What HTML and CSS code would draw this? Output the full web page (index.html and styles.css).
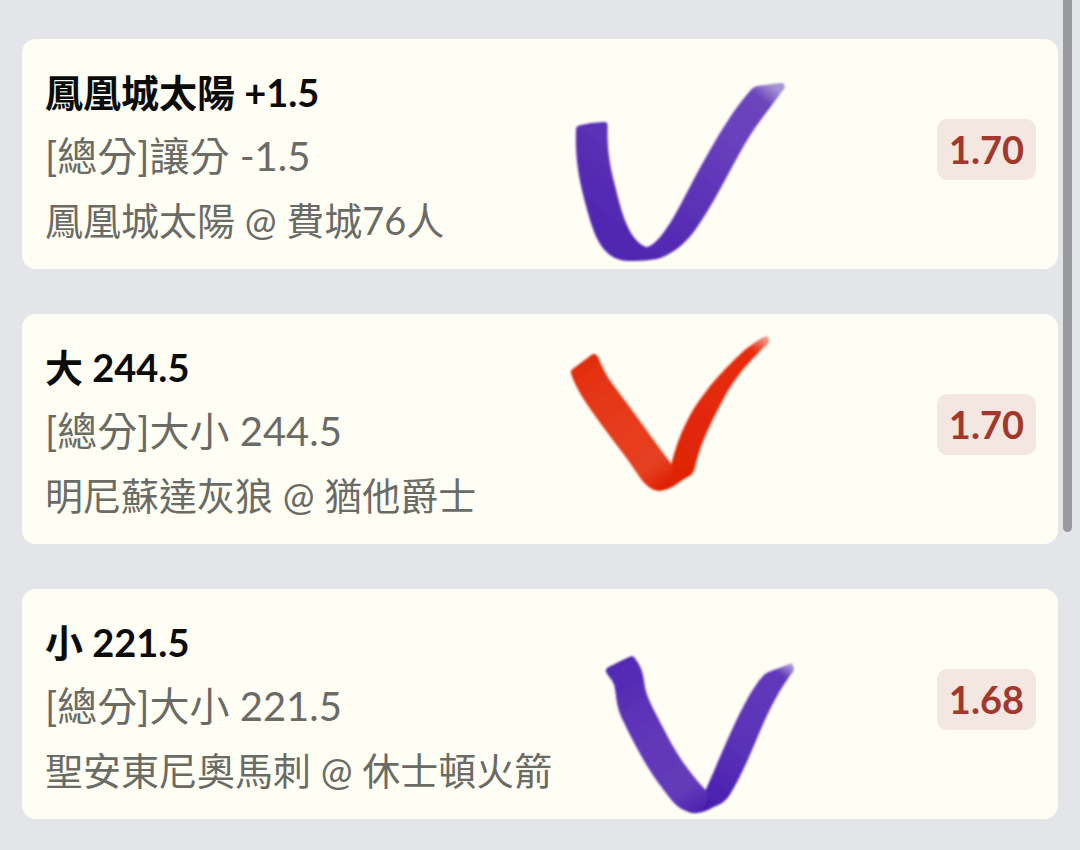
FILE: index.html
```
<!DOCTYPE html>
<html lang="zh-Hant">
<head>
<meta charset="utf-8">
<meta name="viewport" content="width=device-width, initial-scale=1">
<title>投注單</title>
<link rel="stylesheet" href="styles.css">
</head>
<body>
<main class="bets">
  <article class="bet">
    <div class="bet-info">
      <h2 class="bet-pick">鳳凰城太陽 +1.5</h2>
      <p class="bet-market">[總分]讓分 -1.5</p>
      <p class="bet-match">鳳凰城太陽 @ 費城76人</p>
    </div>
    <span class="odds">1.70</span>
    <svg class="mark mark-first" viewBox="0 0 780 660" aria-hidden="true">
      <defs>
        <linearGradient id="ink1" gradientUnits="userSpaceOnUse" x1="250" y1="590" x2="660" y2="70">
          <stop offset="0" stop-color="#5026b0"/>
          <stop offset=".35" stop-color="#5b31b6"/>
          <stop offset=".7" stop-color="#6940bd"/>
          <stop offset=".92" stop-color="#6b45bc"/>
          <stop offset="1" stop-color="#a493d3"/>
        </linearGradient>
        <filter id="soft"><feGaussianBlur stdDeviation="3"/></filter>
      </defs>
      <g filter="url(#soft)">
        <path fill="url(#ink1)" d="M78 208Q77 200 86 197Q125 187 164 186Q173 187 173 196C170 268 180 320 196 380C214 455 236 542 291 562C345 543 396 421 453 318C503 229 551 147 602 91C612 79 624 77 641 76Q670 70 697 69Q708 74 702 86C666 137 620 190 581 258C532 345 486 440 435 511C402 557 363 584 322 597Q275 605 224 602C157 594 134 528 115 463C94 385 74 318 78 208Z"/>
        <path fill="none" stroke="#4b20a8" stroke-opacity=".45" stroke-width="5" d="M87 198Q125 190 166 189"/>
      </g>
    </svg>
  </article>

  <article class="bet">
    <div class="bet-info">
      <h2 class="bet-pick">大 244.5</h2>
      <p class="bet-market">[總分]大小 244.5</p>
      <p class="bet-match">明尼蘇達灰狼 @ 猶他爵士</p>
    </div>
    <span class="odds">1.70</span>
    <svg class="mark mark-second" viewBox="0 0 780 570" aria-hidden="true">
      <defs>
        <linearGradient id="ink2" gradientUnits="userSpaceOnUse" x1="370" y1="470" x2="655" y2="50">
          <stop offset="0" stop-color="#df2405"/>
          <stop offset=".88" stop-color="#e62d0e"/>
          <stop offset="1" stop-color="#efaaa0"/>
        </linearGradient>
        <linearGradient id="ink2b" gradientUnits="userSpaceOnUse" x1="110" y1="120" x2="370" y2="470">
          <stop offset="0" stop-color="#e22d0d"/>
          <stop offset=".3" stop-color="#e53817"/>
          <stop offset=".85" stop-color="#e64022"/>
          <stop offset="1" stop-color="#df2405"/>
        </linearGradient>
      </defs>
      <g filter="url(#soft)">
        <path fill="url(#ink2)" d="M310 500L364 432C385 345 420 275 465 218C507 162 551 122 583 91C608 72 629 55 648 48Q661 53 656 69C598 123 554 173 519 240C478 318 455 365 438 429Q433 461 420 467Q397 480 385 489Q349 518 310 509Z"/>
        <path fill="url(#ink2b)" d="M62 157Q62 150 72 144L127 103Q137 99 144 110C157 141 168 166 190 195C250 274 305 353 364 432Q371 443 366 468Q359 500 335 512C301 514 281 490 260 458C224 403 160 326 115 259C94 228 72 191 62 157Z"/>
        <path fill="none" stroke="#b84a36" stroke-opacity=".6" stroke-width="4" d="M66 153Q70 146 80 141L127 106Q138 102 142 110"/>
      </g>
    </svg>
  </article>

  <article class="bet">
    <div class="bet-info">
      <h2 class="bet-pick">小 221.5</h2>
      <p class="bet-market">[總分]大小 221.5</p>
      <p class="bet-match">聖安東尼奧馬刺 @ 休士頓火箭</p>
    </div>
    <span class="odds">1.68</span>
    <svg class="mark mark-third" viewBox="0 0 720 570" aria-hidden="true">
      <defs>
        <linearGradient id="ink3" gradientUnits="userSpaceOnUse" x1="380" y1="480" x2="640" y2="72">
          <stop offset="0" stop-color="#4a1fb0"/>
          <stop offset=".4" stop-color="#5a32b7"/>
          <stop offset=".9" stop-color="#6139ba"/>
          <stop offset="1" stop-color="#b9aadb"/>
        </linearGradient>
        <linearGradient id="ink3b" gradientUnits="userSpaceOnUse" x1="120" y1="90" x2="370" y2="500">
          <stop offset="0" stop-color="#5329b4"/>
          <stop offset=".5" stop-color="#6238b8"/>
          <stop offset=".85" stop-color="#633bb9"/>
          <stop offset="1" stop-color="#4e24b1"/>
        </linearGradient>
      </defs>
      <g filter="url(#soft)">
        <path fill="url(#ink3)" d="M325 505L377 450C421 351 462 246 510 163C530 131 544 107 564 97L634 70Q644 77 641 92C600 145 572 201 544 264C514 337 483 409 454 457Q441 482 421 492Q398 502 382 511Q353 525 325 516Z"/>
        <path fill="url(#ink3b)" d="M77 93Q78 83 92 78Q121 63 153 49Q162 47 167 58C189 88 190 110 196 147C204 181 228 221 250 265C289 342 324 394 377 450Q387 461 381 482Q369 517 341 518C294 514 274 480 247 445C199 382 161 309 130 244C104 190 111 162 102 134C95 115 83 109 77 93Z"/>
        <path fill="none" stroke="#44208f" stroke-opacity=".5" stroke-width="4" d="M83 87Q120 67 157 52"/>
      </g>
    </svg>
  </article>
</main>
<div class="scroll-thumb" aria-hidden="true"></div>
</body>
</html>
```
FILE: styles.css
```
* {
  box-sizing: border-box;
}

body {
  margin: 0;
  min-height: 100vh;
  background: #e4e5e8;
  font-family: Lato, "Noto Sans CJK TC", sans-serif;
  font-size: 38px;
  line-height: 64px;
}

.bets {
  display: flex;
  flex-direction: column;
  gap: 45px;
  padding: 39px 22px 30px;
}

.bet {
  position: relative;
  display: flex;
  align-items: flex-start;
  justify-content: space-between;
  padding: 21px 22px 17px 23px;
  border-radius: 14px;
  background: #fefef4;
}

.bet-pick,
.bet-market,
.bet-match {
  margin: 0;
  font-size: inherit;
}

.bet-pick {
  color: #0b0b09;
  font-weight: 700;
}

.bet-market,
.bet-match {
  color: #6b6b66;
}

.bet-market {
  font-size: 40px;
}

.odds {
  margin-top: 59px;
  padding: 0 12px;
  border-radius: 10px;
  background: #f4e6e0;
  color: #a2382c;
  font-weight: 700;
  line-height: 61px;
}

.mark {
  position: absolute;
  overflow: visible;
  pointer-events: none;
}

.mark-first {
  top: 21px;
  left: 528px;
  width: 260px;
}

.mark-second {
  top: 6px;
  left: 528px;
  width: 260px;
}

.mark-third {
  top: 51px;
  left: 558px;
  width: 240px;
}

.scroll-thumb {
  position: absolute;
  top: 0;
  right: 8px;
  width: 9px;
  height: 532px;
  border-radius: 0 0 5px 5px;
  background: #98999c;
}
```
